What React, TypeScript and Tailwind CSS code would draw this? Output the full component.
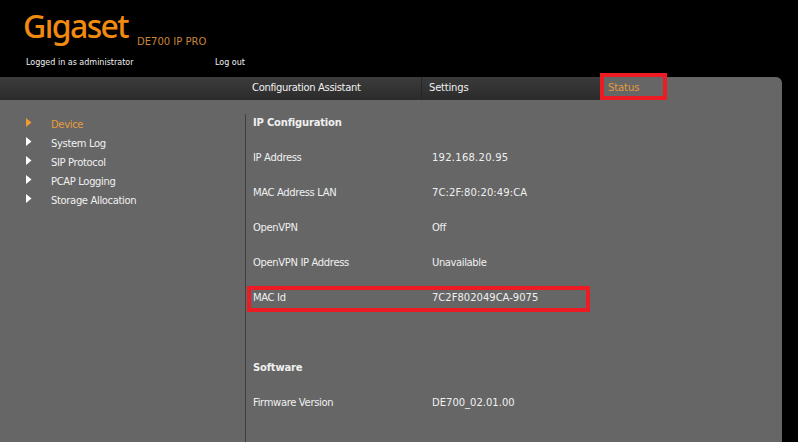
const menu = ["Device", "System Log", "SIP Protocol", "PCAP Logging", "Storage Allocation"];

const ipRows = [
  ["IP Address", "192.168.20.95", "tracking-[0.25px]"],
  ["MAC Address LAN", "7C:2F:80:20:49:CA", "tracking-[0.1px]"],
  ["OpenVPN", "Off", "tracking-[-0.3px]"],
  ["OpenVPN IP Address", "Unavailable", "tracking-[-0.4px]"],
];

function Row({ label, value, cls }: { label: string; value: string; cls?: string }) {
  return (
    <div className="flex h-[35px] items-center">
      <div className="w-[179px] tracking-[-0.35px]">{label}</div>
      <div className={cls}>{value}</div>
    </div>
  );
}

export default function App() {
  return (
    <div className="relative flex h-[442px] w-[798px] flex-col overflow-hidden bg-black font-['DejaVu_Sans',sans-serif] text-[10px] text-[#f0f0f0]">
      {/* header */}
      <div className="h-[77px] shrink-0">
        <div className="flex items-end pl-[23px] pt-[7px]">
          <span className="font-['Noto_Sans',sans-serif] text-[32px] font-medium leading-[38px] tracking-[-1.6px] text-[#f08a10]">Gıgaset</span>
          <span className="mb-[-4px] ml-[9px] text-[10px] text-[#c9853a]">DE700 IP PRO</span>
        </div>
        <div className="mt-[12px] flex pl-[26px] text-[8px]">
          <span className="w-[189px]">Logged in as administrator</span>
          <span>Log out</span>
        </div>
      </div>

      {/* tabs + panel */}
      <div className="flex w-[782px] flex-1 flex-col overflow-hidden rounded-tr-[6px] bg-[#666666]">
        <div className="flex h-[23px] shrink-0">
          <div className="h-full w-[421px] bg-gradient-to-b from-[#3c3c3c] to-[#2b2b2b] pl-[252px] pt-[3px] tracking-[-0.35px]">Configuration Assistant</div>
          <div className="h-full w-[180px] border-l border-[#262626] bg-gradient-to-b from-[#3a3a3a] to-[#2b2b2b] pl-[7px] pt-[3px] tracking-[-0.2px]">Settings</div>
          <div className="pl-[7px] pt-[3px] tracking-[-0.1px] text-[#e59a3c]">Status</div>
        </div>
        <div className="flex flex-1 pt-[14px]">
          <div className="w-[245px] shrink-0 pl-[26px] pt-[1px]">
            {menu.map((m, i) => (
              <div key={m} className={`flex h-[19px] items-center tracking-[-0.35px] ${i === 0 ? "text-[#e59a3c]" : ""}`}>
                <svg width="6" height="9" viewBox="0 0 6 9" className="mb-[4px] shrink-0">
                  <path d="M0 0 L5.5 4.5 L0 9 Z" fill={i === 0 ? "#f09a30" : "#ffffff"} />
                </svg>
                <span className="ml-[19px]">{m}</span>
              </div>
            ))}
          </div>
          <div className="flex-1 border-l border-[#3f3f3f] pl-[7px]">
            <div className="h-[26px] font-bold leading-[17px] tracking-[-0.2px]">IP Configuration</div>
            {ipRows.map(([l, v, c]) => (
              <Row key={l} label={l} value={v} cls={c} />
            ))}
            <Row label="MAC Id" value="7C2F802049CA-9075" />
            <div className="mt-[35px] h-[35px] font-bold leading-[35px] tracking-[-0.2px]">Software</div>
            <Row label="Firmware Version" value="DE700_02.01.00" />
          </div>
        </div>
      </div>

      {/* annotation boxes drawn over the screenshot */}
      <div className="absolute left-[600px] top-[73px] h-[27px] w-[67px] border-4 border-[#ed1c24]" />
      <div className="absolute left-[247px] top-[286px] h-[26px] w-[343px] border-4 border-[#ed1c24]" />
    </div>
  );
}
